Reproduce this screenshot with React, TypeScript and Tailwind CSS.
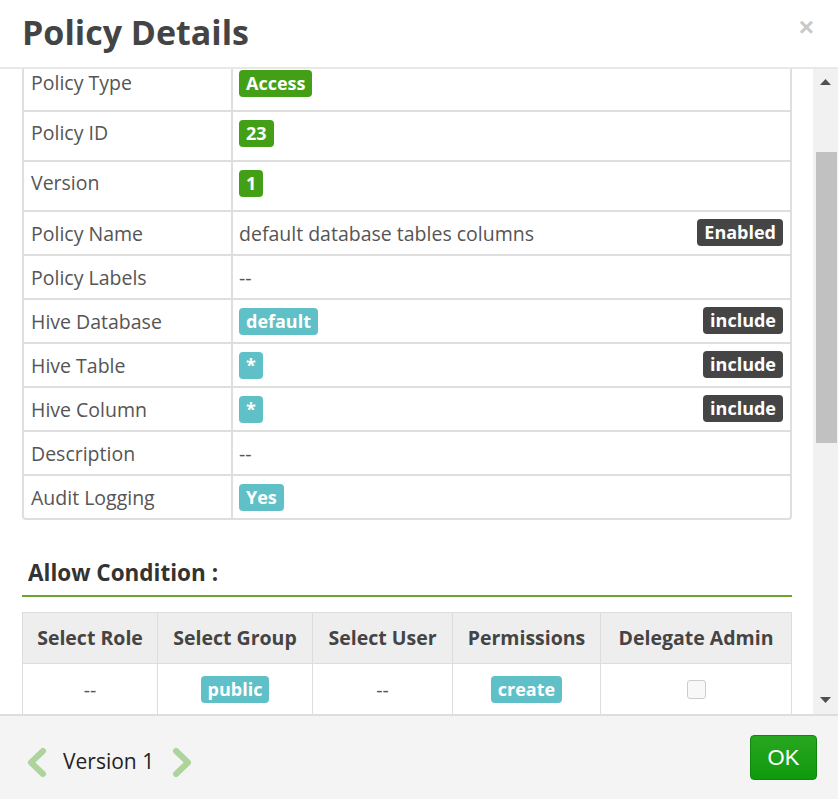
const font = { fontFamily: '"Open Sans", "Liberation Sans", sans-serif' };

type Badge = { text: string; tone: "green" | "teal" | "dark" };

type DetailRow = {
    label: string;
    value?: string;
    badge?: Badge;
    right?: Badge;
    tall?: boolean;
};

const rows: DetailRow[] = [
    { label: "Policy Type", badge: { text: "Access", tone: "green" }, tall: true },
    { label: "Policy ID", badge: { text: "23", tone: "green" }, tall: true },
    { label: "Version", badge: { text: "1", tone: "green" }, tall: true },
    { label: "Policy Name", value: "default database tables columns", right: { text: "Enabled", tone: "dark" } },
    { label: "Policy Labels", value: "--" },
    { label: "Hive Database", badge: { text: "default", tone: "teal" }, right: { text: "include", tone: "dark" } },
    { label: "Hive Table", badge: { text: "*", tone: "teal" }, right: { text: "include", tone: "dark" } },
    { label: "Hive Column", badge: { text: "*", tone: "teal" }, right: { text: "include", tone: "dark" } },
    { label: "Description", value: "--" },
    { label: "Audit Logging", badge: { text: "Yes", tone: "teal" } },
];

const toneClass = {
    green: "bg-[#43a016]",
    teal: "bg-[#60c0c8]",
    dark: "bg-[#454545]",
};

const Label = ({ badge }: { badge: Badge }) => (
    <span className={`${toneClass[badge.tone]} inline-block h-[27px] px-[7px] rounded-[4px] text-white font-bold text-[18px] leading-[27px]`}>
        {badge.text}
    </span>
);

const Chevron = ({ dir }: { dir: "left" | "right" }) => (
    <svg width="20" height="31" viewBox="0 0 20 31">
        <polyline
            points={dir === "left" ? "16,4 4,15.5 16,27" : "4,4 16,15.5 4,27"}
            fill="none"
            stroke="#acd49b"
            strokeWidth="6"
            strokeLinecap="round"
            strokeLinejoin="round"
        />
    </svg>
);

const columns = [
    { title: "Select Role", w: "w-[135px]" },
    { title: "Select Group", w: "w-[155px]" },
    { title: "Select User", w: "w-[140px]" },
    { title: "Permissions", w: "w-[148px]" },
    { title: "Delegate Admin", w: "w-[191px]" },
];

const App = () => {
    return (
        <div style={font} className="w-[838px] h-[799px] flex flex-col bg-white overflow-hidden">
            {/* header */}
            <div className="h-[69px] shrink-0 border-b-2 border-[#e8e8e8] flex items-center justify-between pl-[22px] pr-[24px]">
                <h1 className="text-[34px] font-bold text-[#444] leading-none -mt-[3px]">Policy Details</h1>
                <span
                    style={{ fontFamily: '"Liberation Sans", Arial, sans-serif' }}
                    className="text-[26px] font-bold text-[#c8c8c8] leading-none -mt-[14px]">
                    ×
                </span>
            </div>

            {/* body */}
            <div className="flex-1 flex min-h-0">
                <div className="flex-1 overflow-hidden pl-[22px] pr-[21px]">
                    <div className="-mt-[7px]">
                        <div className="border-2 border-t-0 border-[#dedede] rounded-b-[4px]">
                            {rows.map((r, i) => (
                                <div
                                    key={r.label}
                                    className={`flex ${r.tall ? "h-[50px]" : i === rows.length - 1 ? "h-[42px]" : "h-[44px]"} ${i === rows.length - 1 ? "" : "border-b-2 border-[#dedede]"}`}>
                                    <div className={`w-[209px] shrink-0 border-r-2 border-[#dedede] pl-[7px] ${r.tall ? "pt-[7px]" : "pt-[8px]"} text-[19.5px] leading-[27px] text-[#555]`}>
                                        {r.label}
                                    </div>
                                    <div className="flex-1 flex justify-between pl-[6px] pr-[7px] pt-[7px] text-[19.5px] leading-[27px] text-[#555]">
                                        <div className={r.badge ? "" : "pt-[1px]"}>
                                            {r.badge ? <Label badge={r.badge} /> : r.value}
                                        </div>
                                        {r.right && <Label badge={r.right} />}
                                    </div>
                                </div>
                            ))}
                        </div>

                        <div className="mt-[38px] pl-[6px] pb-[7px] border-b-2 border-[#6ba52d]">
                            <h2 className="text-[22.5px] font-bold text-[#333] leading-[30px]">Allow Condition :</h2>
                        </div>

                        <div className="mt-[15px] border-t border-l border-[#dddddd] flex flex-col">
                            <div className="flex bg-[#eeeeee]">
                                {columns.map((c) => (
                                    <div key={c.title} className={`${c.w} h-[51px] border-r border-b border-[#dddddd] flex items-center justify-center text-[19.5px] font-bold text-[#444]`}>
                                        {c.title}
                                    </div>
                                ))}
                            </div>
                            <div className="flex">
                                <div className="w-[135px] h-[52px] border-r border-b border-[#dddddd] flex items-center justify-center text-[19.5px] text-[#555]">--</div>
                                <div className="w-[155px] h-[52px] border-r border-b border-[#dddddd] flex items-center justify-center">
                                    <Label badge={{ text: "public", tone: "teal" }} />
                                </div>
                                <div className="w-[140px] h-[52px] border-r border-b border-[#dddddd] flex items-center justify-center text-[19.5px] text-[#555]">--</div>
                                <div className="w-[148px] h-[52px] border-r border-b border-[#dddddd] flex items-center justify-center">
                                    <Label badge={{ text: "create", tone: "teal" }} />
                                </div>
                                <div className="w-[191px] h-[52px] border-r border-b border-[#dddddd] flex items-center justify-center">
                                    <span className="w-[19px] h-[19px] rounded-[3px] border border-[#cccccc] bg-[#f8f8f8]" />
                                </div>
                            </div>
                        </div>
                    </div>
                </div>

                {/* scrollbar */}
                <div className="w-[25px] shrink-0 bg-[#f1f1f1] flex flex-col items-center">
                    <svg className="mt-[10px]" width="11" height="6" viewBox="0 0 11 6">
                        <polygon points="5.5,0 11,6 0,6" fill="#505050" />
                    </svg>
                    <div className="mt-[67px] ml-[1px] w-[21px] h-[291px] bg-[#c1c1c1]" />
                    <svg className="mt-auto mb-[11px]" width="11" height="6" viewBox="0 0 11 6">
                        <polygon points="0,0 11,0 5.5,6" fill="#505050" />
                    </svg>
                </div>
            </div>

            {/* footer */}
            <div className="h-[85px] shrink-0 border-t-2 border-[#dddddd] bg-[#f4f4f4] flex items-center justify-between pl-[27px] pr-[21px]">
                <div className="flex items-center mt-[9px]">
                    <Chevron dir="left" />
                    <span className="ml-[16px] mr-[18px] text-[21px] text-[#222]">Version 1</span>
                    <Chevron dir="right" />
                </div>
                <button
                    style={{ fontFamily: '"Liberation Sans", Arial, sans-serif' }}
                    className="w-[67px] h-[45px] rounded-[4px] border border-[#0f870c] bg-gradient-to-b from-[#26a71f] to-[#0f990d] text-white text-[22px]">
                    OK
                </button>
            </div>
        </div>
    );
};

export default App;
